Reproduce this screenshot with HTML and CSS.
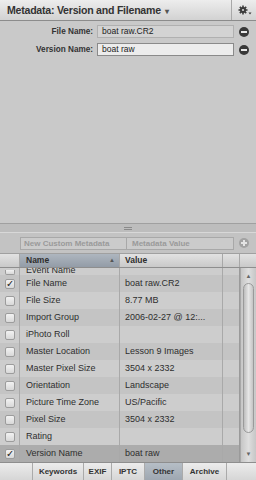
FILE: index.html
```html
<!DOCTYPE html>
<html>
<head>
<meta charset="utf-8">
<link rel="stylesheet" href="styles.css">
</head>
<body>
<div class="app">
  <div class="hdr">
    <div class="title">Metadata: Version and Filename <span class="caret">▾</span></div>
    <div class="gear">
      <svg width="14" height="11" viewBox="0 0 14 11">
        <g fill="#3c3c3c">
          <circle cx="5" cy="5" r="3"/>
          <rect x="4.2" y="0.5" width="1.6" height="9"/>
          <rect x="0.5" y="4.2" width="9" height="1.6"/>
          <rect x="4.2" y="0.5" width="1.6" height="9" transform="rotate(45 5 5)"/>
          <rect x="4.2" y="0.5" width="1.6" height="9" transform="rotate(-45 5 5)"/>
        </g>
        <circle cx="5" cy="5" r="1.1" fill="#d8d8d8"/>
        <path d="M10.5 7.5 L13.5 7.5 L12 9.5 Z" fill="#3c3c3c"/>
      </svg>
    </div>
  </div>

  <div class="top">
    <div class="frow">
      <div class="lbl">File Name:</div>
      <div class="field">boat raw.CR2</div>
      <div class="minus"></div>
    </div>
    <div class="frow">
      <div class="lbl">Version Name:</div>
      <div class="field edit">boat raw</div>
      <div class="minus"></div>
    </div>
  </div>

  <div class="splitter"><div class="grip"></div></div>

  <div class="custom">
    <div class="cfield c1">New Custom Metadata</div>
    <div class="cfield c2">Metadata Value</div>
    <div class="plus"></div>
  </div>

  <div class="thead">
    <div class="th chk"></div>
    <div class="th name sorted">Name<span class="sort">▲</span></div>
    <div class="th val">Value</div>
    <div class="th extra"></div>
    <div class="th scr"></div>
  </div>

  <div class="tbody">
    <div class="rows">
      <div class="row odd partial"><div class="c chk"><span class="box"></span></div><div class="c name"><span class="clip">Event Name</span></div><div class="c val"></div><div class="c extra"></div></div>
      <div class="row even"><div class="c chk"><span class="box on">✓</span></div><div class="c name">File Name</div><div class="c val">boat raw.CR2</div><div class="c extra"></div></div>
      <div class="row odd"><div class="c chk"><span class="box"></span></div><div class="c name">File Size</div><div class="c val">8.77 MB</div><div class="c extra"></div></div>
      <div class="row even"><div class="c chk"><span class="box"></span></div><div class="c name">Import Group</div><div class="c val">2006-02-27 @ 12:...</div><div class="c extra"></div></div>
      <div class="row odd"><div class="c chk"><span class="box"></span></div><div class="c name">iPhoto Roll</div><div class="c val"></div><div class="c extra"></div></div>
      <div class="row even"><div class="c chk"><span class="box"></span></div><div class="c name">Master Location</div><div class="c val">Lesson 9 Images</div><div class="c extra"></div></div>
      <div class="row odd"><div class="c chk"><span class="box"></span></div><div class="c name">Master Pixel Size</div><div class="c val">3504 x 2332</div><div class="c extra"></div></div>
      <div class="row even"><div class="c chk"><span class="box"></span></div><div class="c name">Orientation</div><div class="c val">Landscape</div><div class="c extra"></div></div>
      <div class="row odd"><div class="c chk"><span class="box"></span></div><div class="c name">Picture Time Zone</div><div class="c val">US/Pacific</div><div class="c extra"></div></div>
      <div class="row even"><div class="c chk"><span class="box"></span></div><div class="c name">Pixel Size</div><div class="c val">3504 x 2332</div><div class="c extra"></div></div>
      <div class="row odd"><div class="c chk"><span class="box"></span></div><div class="c name">Rating</div><div class="c val"></div><div class="c extra"></div></div>
      <div class="row sel"><div class="c chk"><span class="box on">✓</span></div><div class="c name">Version Name</div><div class="c val">boat raw</div><div class="c extra"></div></div>
    </div>
    <div class="scrollbar">
      <span class="arrow up">▲</span>
      <div class="thumb"></div>
      <span class="arrow down">▼</span>
    </div>
  </div>

  <div class="tabs">
    <div class="tab blank1"></div>
    <div class="tab t-kw">Keywords</div>
    <div class="tab t-exif">EXIF</div>
    <div class="tab t-iptc">IPTC</div>
    <div class="tab t-other active">Other</div>
    <div class="tab t-arch">Archive</div>
    <div class="tab blank2"></div>
  </div>
</div>
</body>
</html>
```

FILE: styles.css
```css
* { box-sizing: border-box; }
html, body { margin: 0; padding: 0; }
body {
  width: 256px;
  height: 480px;
  overflow: hidden;
  font-family: "Liberation Sans", Arial, sans-serif;
  background: #c8c8c8;
  color: #2e2e2e;
}
.app { display: flex; flex-direction: column; height: 480px; }

/* header */
.hdr {
  height: 21px;
  display: flex;
  border-bottom: 1px solid #8c8c8c;
  background: linear-gradient(#ededed, #d2d2d2);
}
.title {
  flex: 1;
  font-weight: bold;
  font-size: 10.6px;
  letter-spacing: -0.25px;
  color: #333;
  padding-left: 7px;
  line-height: 20px;
}
.caret { font-size: 8px; color: #555; margin-left: 1px; }
.gear {
  width: 25px;
  border-left: 1px solid #a8a8a8;
  display: flex;
  align-items: center;
  justify-content: center;
  padding-left: 2px;
}

/* top panel */
.top {
  height: 202px;
  padding-top: 4px;
  display: flex;
  flex-direction: column;
  gap: 5px;
  background: #c9c9c9;
}
.frow { display: flex; align-items: center; height: 13px; }
.lbl {
  width: 97px;
  text-align: right;
  padding-right: 4px;
  font-weight: bold;
  font-size: 8.2px;
  color: #333;
}
.field {
  width: 137px;
  height: 13px;
  border: 1px solid #b0b0b0;
  background: #d3d3d3;
  font-size: 8.5px;
  line-height: 11px;
  padding-left: 4px;
  color: #222;
}
.field.edit { background: #ececec; border-color: #8a8a8a; }
.minus {
  width: 10px;
  height: 10px;
  border-radius: 50%;
  background: #383838;
  margin-left: 5px;
  position: relative;
}
.minus::after {
  content: "";
  position: absolute;
  left: 2px; top: 4px;
  width: 6px; height: 2px;
  background: #e8e8e8;
}

/* splitter */
.splitter {
  height: 9px;
  background: #bdbdbd;
  border-top: 1px solid #a0a0a0;
  display: flex;
  align-items: center;
  justify-content: center;
}
.grip {
  width: 8px;
  height: 3px;
  border-top: 1px solid #8a8a8a;
  border-bottom: 1px solid #8a8a8a;
}

/* custom metadata */
.custom {
  height: 21px;
  display: flex;
  align-items: center;
  padding-left: 20px;
  background: #c3c3c3;
  border-top: 1px solid #d8d8d8;
}
.cfield {
  height: 13px;
  border: 1px solid #a8a8a8;
  background: #cbcbcb;
  font-size: 8px;
  font-weight: bold;
  color: #9a9a9a;
  line-height: 11px;
  padding-left: 3px;
}
.c1 { width: 107px; }
.c2 { width: 107px; border-left: none; padding-left: 5px; }
.plus {
  width: 10px;
  height: 10px;
  border-radius: 50%;
  background: #a2a2a2;
  margin-left: 5px;
  position: relative;
}
.plus::before, .plus::after {
  content: "";
  position: absolute;
  background: #e4e4e4;
}
.plus::before { left: 2px; top: 4px; width: 6px; height: 2px; }
.plus::after { left: 4px; top: 2px; width: 2px; height: 6px; }

/* table header */
.thead {
  height: 15px;
  display: flex;
  background: linear-gradient(#e2e2e2, #c9c9c9);
  border-top: 1px solid #a0a0a0;
  border-bottom: 1px solid #8e8e8e;
  font-size: 8.5px;
  font-weight: bold;
  color: #2e2e2e;
}
.th { line-height: 13px; border-right: 1px solid #a8a8a8; }
.th.chk { width: 20px; }
.th.name {
  width: 100px;
  padding-left: 6px;
  display: flex;
  justify-content: space-between;
  padding-right: 4px;
}
.th.name.sorted { background: linear-gradient(#aeb6bf, #939ca7); }
.sort { font-size: 6px; color: #555; }
.th.val { width: 103px; padding-left: 5px; }
.th.extra { width: 17px; }
.th.scr { width: 16px; border-right: none; }

/* table body */
.tbody {
  height: 194px;
  display: flex;
  overflow: hidden;
}
.rows { width: 240px; overflow: hidden; }
.row {
  height: 17px;
  display: flex;
  font-size: 9px;
  color: #2e2e2e;
  line-height: 17px;
}
.row.partial { height: 7px; line-height: 7px; align-items: flex-end; }
.row.partial .c { height: 7px; }
.row.partial .c.chk { align-items: flex-end; }
.row.partial .box { height: 5px; border-top: none; border-radius: 0 0 2px 2px; }
.clip { display: block; height: 7px; overflow: hidden; line-height: 4px; font-size: 9px; }
.row.odd { background: #cdcdcd; }
.row.even { background: #c4c4c4; }
.row.sel { background: #acacac; }
.c { border-right: 1px solid #a9a9a9; white-space: nowrap; overflow: hidden; }
.c.chk { width: 20px; display: flex; align-items: center; padding-left: 5px; }
.c.name { width: 100px; padding-left: 6px; }
.c.val { width: 103px; padding-left: 5px; }
.c.extra { width: 17px; border-right: 1px solid #9a9a9a; }
.box {
  width: 10px;
  height: 10px;
  border: 1px solid #9c9c9c;
  border-radius: 2px;
  background: linear-gradient(#f2f2f2, #d8d8d8);
  font-size: 10px;
  line-height: 7px;
  font-weight: bold;
  color: #222;
  font-family: "DejaVu Sans", sans-serif;
}

/* scrollbar */
.scrollbar {
  width: 16px;
  background: linear-gradient(90deg, #c6c6c6, #dedede 50%, #c6c6c6);
  display: flex;
  flex-direction: column;
  align-items: center;
  border-left: 1px solid #a8a8a8;
}
.arrow { font-size: 6px; color: #666; line-height: 8px; }
.arrow.up { margin-top: 4px; }
.arrow.down { margin-top: auto; margin-bottom: 4px; }
.thumb {
  width: 11px;
  height: 150px;
  margin-top: 3px;
  border: 1px solid #9a9a9a;
  border-radius: 6px;
  background: linear-gradient(90deg, #bdbdbd, #e6e6e6 50%, #c4c4c4);
}

/* tabs */
.tabs {
  height: 18px;
  display: flex;
  background: linear-gradient(#ececec, #d6d6d6);
  border-top: 1px solid #8e8e8e;
  font-size: 8px;
  font-weight: bold;
  color: #333;
}
.tab {
  border-right: 1px solid #aaaaaa;
  text-align: center;
  line-height: 17px;
}
.blank1 { width: 33px; }
.t-kw { width: 51px; }
.t-exif { width: 28px; }
.t-iptc { width: 33px; }
.t-other { width: 38px; }
.t-arch { width: 44px; }
.blank2 { flex: 1; border-right: none; }
.tab.active { background: linear-gradient(#b6bec6, #9ea7b1); }
```
